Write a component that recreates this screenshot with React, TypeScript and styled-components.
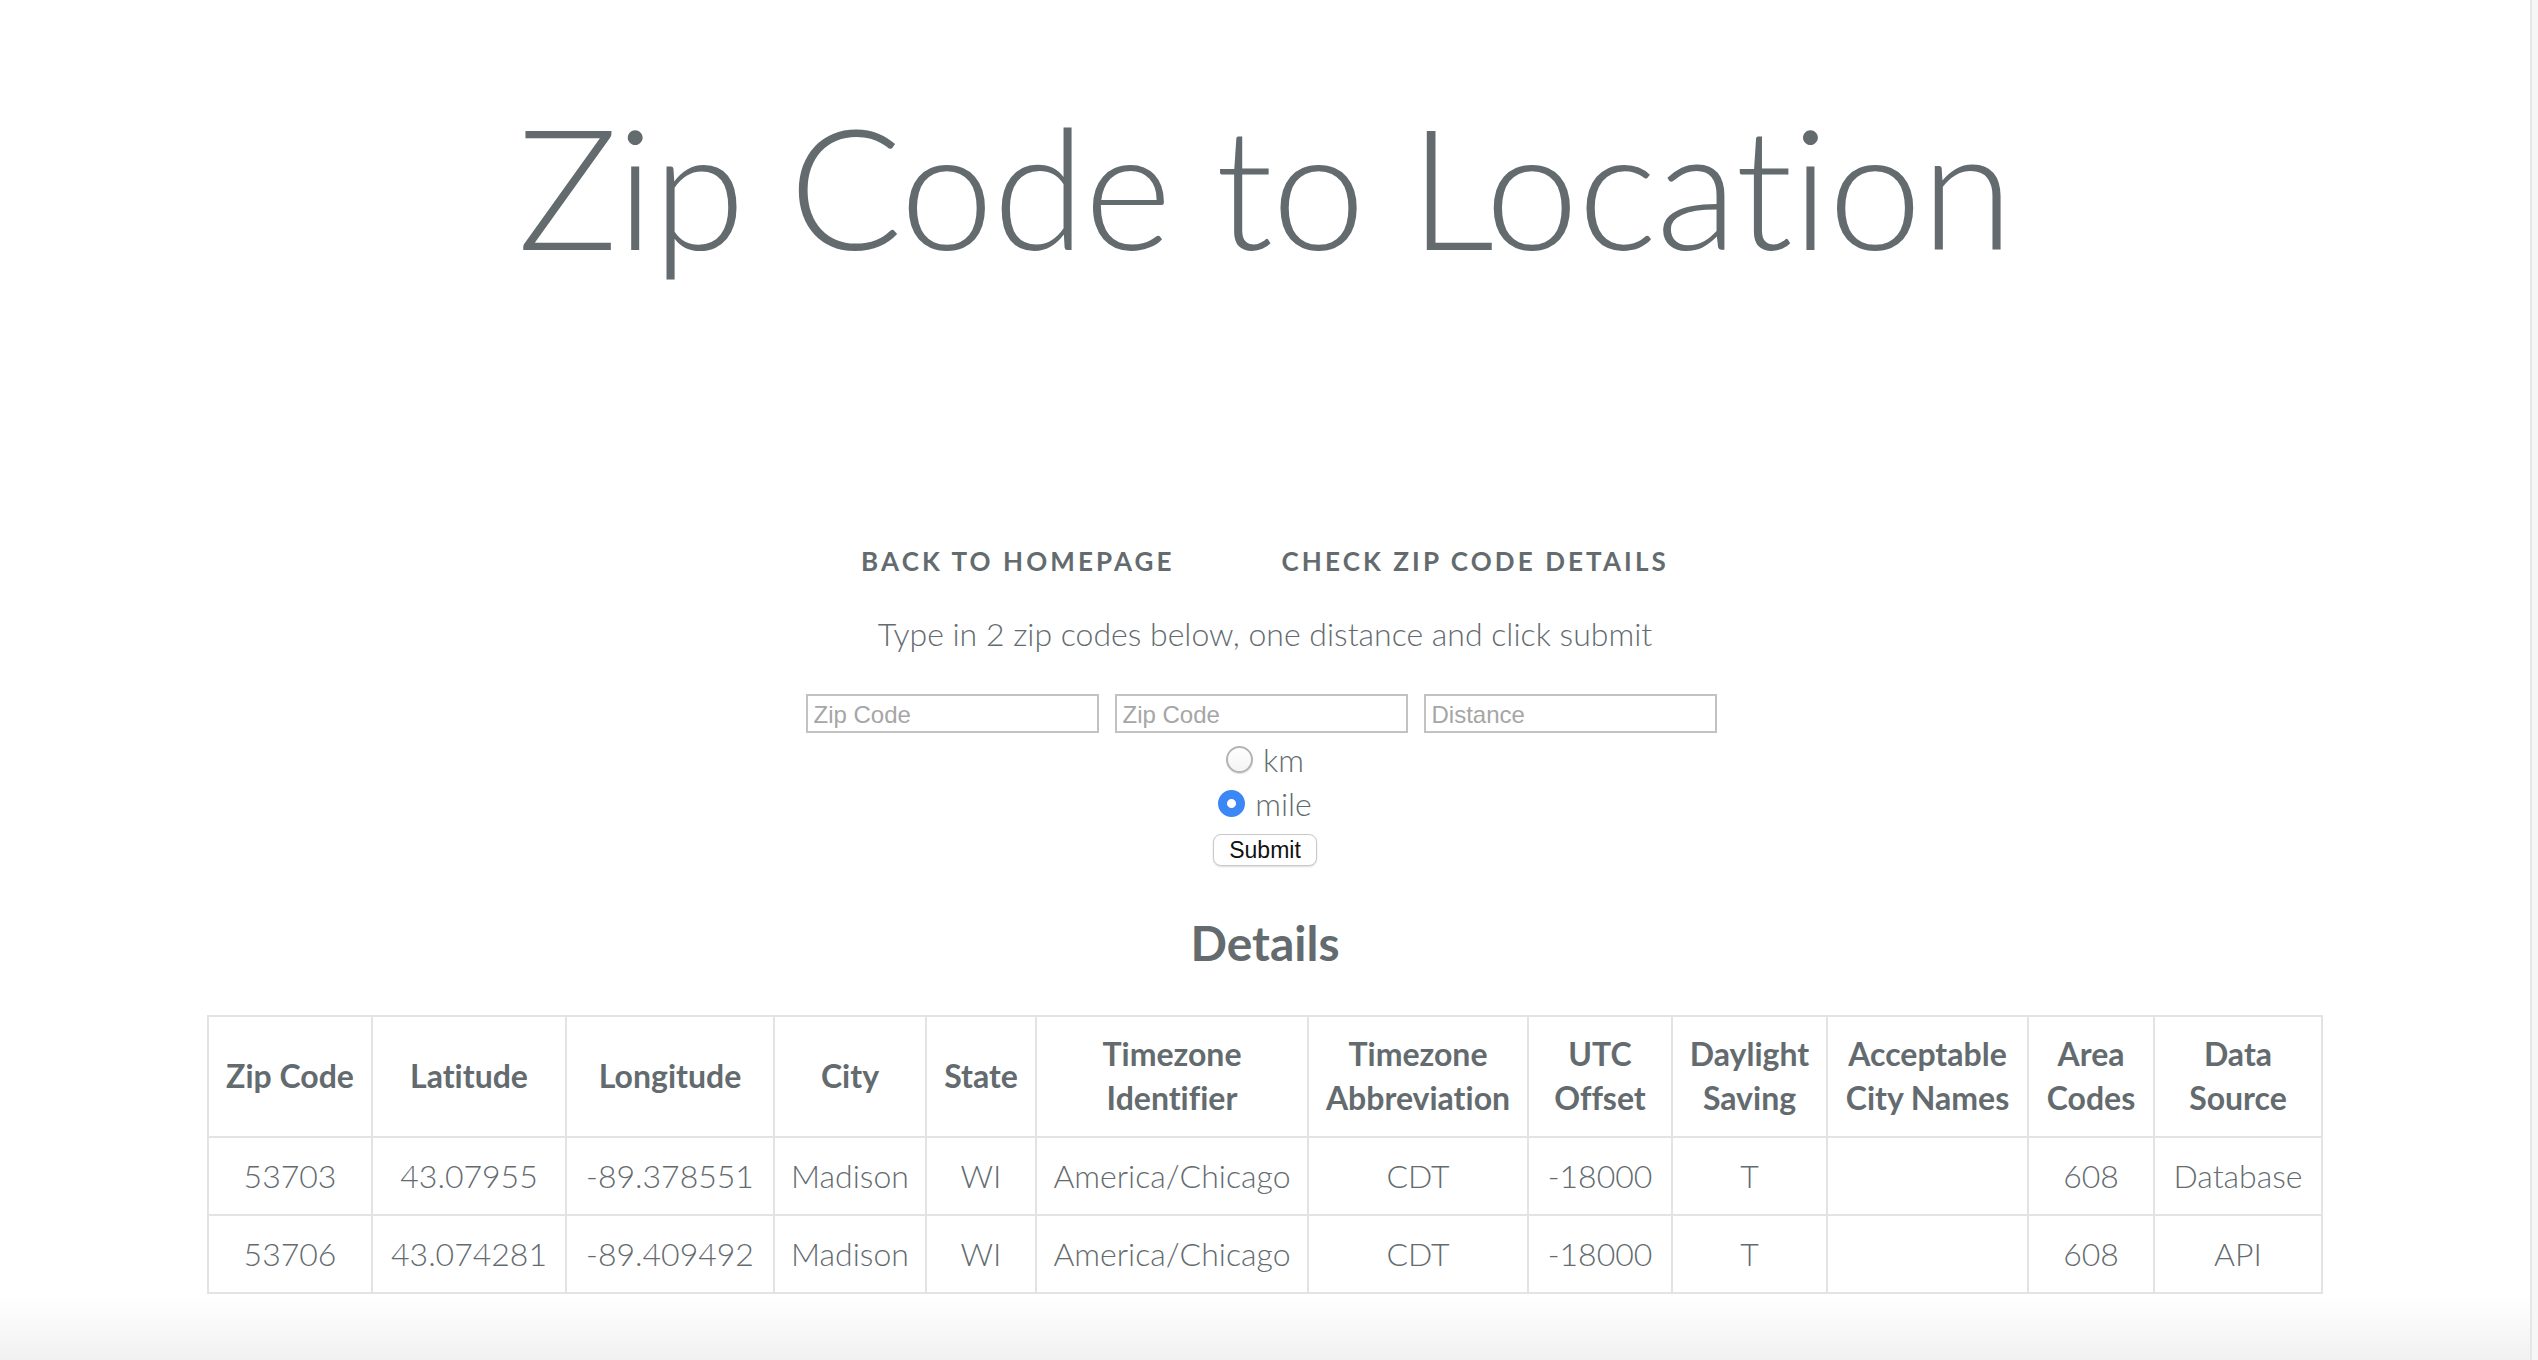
import React from "react";
import styled, { createGlobalStyle } from "styled-components";

const GlobalStyle = createGlobalStyle`
  html, body {
    margin: 0;
    padding: 0;
    background: #ffffff;
  }
  body {
    font-family: "Lato", "Liberation Sans", sans-serif;
    font-variant-ligatures: none;
    color: #636b6f;
  }
  * { box-sizing: border-box; }
`;

const Shell = styled.div`
  display: flex;
  min-height: 100vh;
  width: 100%;
`;

const Main = styled.main`
  flex: 1;
  display: flex;
  flex-direction: column;
  align-items: center;
  padding-top: 101px;
  background: linear-gradient(
    to bottom,
    #ffffff 0,
    #ffffff calc(100% - 64px),
    #f1f1f1 100%
  );
`;

const ScrollTrack = styled.div`
  width: 8px;
  flex-shrink: 0;
  background: #f6f6f6;
  border-left: 2px solid #e6e6e6;
`;

const Title = styled.h1`
  margin: 0;
  font-size: 168px;
  line-height: 168px;
  font-weight: 300;
  letter-spacing: -1px;
  color: #636b6f;
  white-space: nowrap;
`;

const Nav = styled.nav`
  display: flex;
  gap: 7px;
  margin-top: 276px;
  line-height: 32px;
`;

const NavLink = styled.a`
  padding: 0 50px;
  color: #636b6f;
  font-size: 26px;
  font-weight: 700;
  letter-spacing: 3.1px;
  text-decoration: none;
  text-transform: uppercase;
`;

const Lead = styled.p`
  margin: 37px 0 0;
  font-size: 32px;
  line-height: 40px;
  font-weight: 300;
  color: #636b6f;
`;

const InputRow = styled.div`
  display: flex;
  gap: 16px;
  margin-top: 40px;
  padding-right: 8px;
`;

const TextInput = styled.input`
  width: 293px;
  height: 39px;
  padding: 2px 6px 0;
  border: 2px solid #c2c2c2;
  border-radius: 0;
  background: #ffffff;
  font-family: "Liberation Sans", Arial, sans-serif;
  font-size: 24px;
  color: #222;
  outline: none;
  &::placeholder {
    color: #a6a6a6;
    font-size: 24px;
  }
`;

const RadioGroup = styled.div`
  display: flex;
  flex-direction: column;
  align-items: center;
  margin-top: 4px;
`;

const RadioLabel = styled.label`
  display: flex;
  align-items: center;
  gap: 10px;
  height: 44px;
  font-size: 32px;
  font-weight: 300;
  color: #636b6f;
`;

const Radio = styled.input`
  appearance: none;
  -webkit-appearance: none;
  margin: 0;
  width: 27px;
  height: 27px;
  border-radius: 50%;
  border: 2px solid #b4b4b4;
  background: linear-gradient(to bottom, #ffffff, #f4f4f4);
  box-shadow: 0 1px 1px rgba(0, 0, 0, 0.14);
  &:checked {
    border-color: #3b87f5;
    background: radial-gradient(circle closest-side, #ffffff 0 4px, #3b87f5 5px);
    box-shadow: none;
  }
`;

const SubmitButton = styled.button`
  margin-top: 9px;
  width: 104px;
  height: 32px;
  padding: 0;
  border: 1.5px solid #c9c9c9;
  border-radius: 8px;
  background: #ffffff;
  box-shadow: 0 1px 2px rgba(0, 0, 0, 0.14);
  font-family: "Liberation Sans", Arial, sans-serif;
  font-size: 23px;
  color: #111;
`;

const SectionTitle = styled.h4`
  margin: 49px 0 0;
  font-size: 48px;
  line-height: 56px;
  font-weight: 700;
  color: #636b6f;
`;

const DataTable = styled.table`
  margin-top: 44px;
  width: 2114px;
  table-layout: fixed;
  border-collapse: collapse;
  color: #636b6f;
  font-size: 32px;
  line-height: 44px;
`;

const Th = styled.th`
  padding: 15px 6px 16px;
  border: 2px solid #e1e3e5;
  font-weight: 700;
  text-align: center;
  vertical-align: middle;
`;

const Td = styled.td`
  padding: 16px 6px;
  border: 2px solid #e1e3e5;
  font-weight: 300;
  text-align: center;
  vertical-align: middle;
  white-space: nowrap;
`;

const columns: { label: React.ReactNode; width: number }[] = [
  { label: "Zip Code", width: 164 },
  { label: "Latitude", width: 194 },
  { label: "Longitude", width: 208 },
  { label: "City", width: 152 },
  { label: "State", width: 110 },
  { label: <>Timezone<br />Identifier</>, width: 272 },
  { label: <>Timezone<br />Abbreviation</>, width: 220 },
  { label: <>UTC<br />Offset</>, width: 144 },
  { label: <>Daylight<br />Saving</>, width: 155 },
  { label: <>Acceptable<br />City Names</>, width: 201 },
  { label: <>Area<br />Codes</>, width: 126 },
  { label: <>Data<br />Source</>, width: 168 },
];

const rows: string[][] = [
  ["53703", "43.07955", "-89.378551", "Madison", "WI", "America/Chicago", "CDT", "-18000", "T", "", "608", "Database"],
  ["53706", "43.074281", "-89.409492", "Madison", "WI", "America/Chicago", "CDT", "-18000", "T", "", "608", "API"],
];

export default function App() {
  return (
    <Shell>
      <GlobalStyle />
      <Main>
        <Title>Zip Code to Location</Title>
        <Nav>
          <NavLink href="#">Back to Homepage</NavLink>
          <NavLink href="#">Check Zip Code Details</NavLink>
        </Nav>
        <Lead>Type in 2 zip codes below, one distance and click submit</Lead>
        <InputRow>
          <TextInput type="text" placeholder="Zip Code" />
          <TextInput type="text" placeholder="Zip Code" />
          <TextInput type="text" placeholder="Distance" />
        </InputRow>
        <RadioGroup>
          <RadioLabel>
            <Radio type="radio" name="unit" value="km" />
            km
          </RadioLabel>
          <RadioLabel>
            <Radio type="radio" name="unit" value="mile" defaultChecked />
            mile
          </RadioLabel>
        </RadioGroup>
        <SubmitButton type="button">Submit</SubmitButton>
        <SectionTitle>Details</SectionTitle>
        <DataTable>
          <colgroup>
            {columns.map((c, i) => (
              <col key={i} width={c.width} />
            ))}
          </colgroup>
          <thead>
            <tr>
              {columns.map((c, i) => (
                <Th key={i}>{c.label}</Th>
              ))}
            </tr>
          </thead>
          <tbody>
            {rows.map((r, i) => (
              <tr key={i}>
                {r.map((v, j) => (
                  <Td key={j}>{v}</Td>
                ))}
              </tr>
            ))}
          </tbody>
        </DataTable>
      </Main>
      <ScrollTrack />
    </Shell>
  );
}
